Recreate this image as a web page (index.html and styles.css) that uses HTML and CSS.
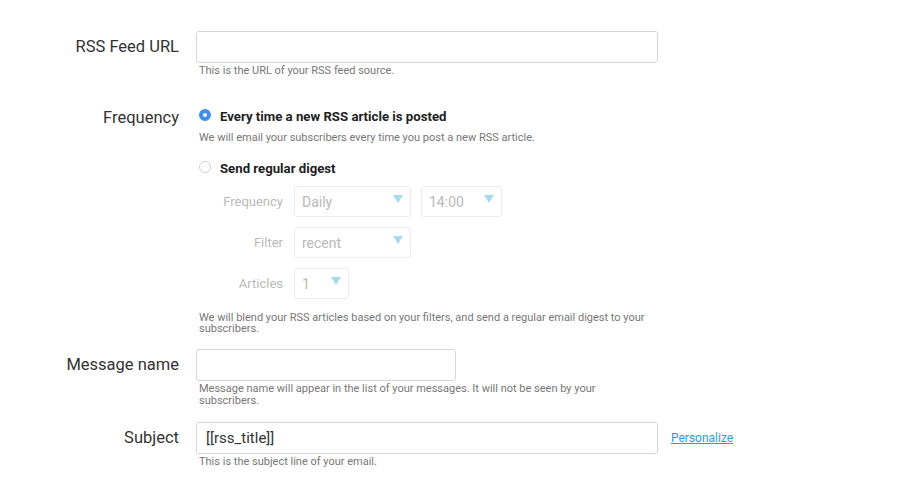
FILE: index.html
```html
<!DOCTYPE html>
<html lang="en">
<head>
<meta charset="utf-8">
<title>RSS campaign</title>
<link rel="stylesheet" href="styles.css">
</head>
<body>
<form class="form">
  <div class="row row-url">
    <label class="label">RSS Feed URL</label>
    <div class="field">
      <input class="input input-wide" type="text">
      <p class="help">This is the URL of your RSS feed source.</p>
    </div>
  </div>

  <div class="row row-freq">
    <div class="label label-small">Frequency</div>
    <div class="field">
      <div class="option">
        <span class="radio radio-on"></span>
        <span class="option-text">Every time a new RSS article is posted</span>
      </div>
      <p class="help help-option">We will email your subscribers every time you post a new RSS article.</p>
      <div class="option option-second">
        <span class="radio"></span>
        <span class="option-text">Send regular digest</span>
      </div>
      <div class="digest">
        <div class="sub-label">Frequency</div>
        <div class="sub-controls">
          <div class="select select-md"><span>Daily</span><i class="caret"></i></div>
          <div class="select select-time"><span>14:00</span><i class="caret"></i></div>
        </div>
        <div class="sub-label">Filter</div>
        <div class="sub-controls">
          <div class="select select-md"><span>recent</span><i class="caret"></i></div>
        </div>
        <div class="sub-label">Articles</div>
        <div class="sub-controls">
          <div class="select select-sm"><span>1</span><i class="caret"></i></div>
        </div>
      </div>
      <p class="help help-blend">We will blend your RSS articles based on your filters, and send a regular email digest to your subscribers.</p>
    </div>
  </div>

  <div class="row row-name">
    <label class="label">Message name</label>
    <div class="field">
      <input class="input input-mid" type="text">
      <p class="help help-multi">Message name will appear in the list of your messages. It will not be seen by your subscribers.</p>
    </div>
  </div>

  <div class="row row-subject">
    <label class="label">Subject</label>
    <div class="field">
      <div class="inline">
        <input class="input input-wide input-filled" type="text" value="[[rss_title]]">
        <a class="link" href="#">Personalize</a>
      </div>
      <p class="help">This is the subject line of your email.</p>
    </div>
  </div>
</form>
</body>
</html>
```

FILE: styles.css
```css
* { box-sizing: border-box; }

html, body {
  margin: 0;
  padding: 0;
  background: #ffffff;
  font-family: Roboto, "Liberation Sans", Arial, sans-serif;
  color: #333333;
}

.form {
  padding-top: 31px;
}

.row {
  display: grid;
  grid-template-columns: 179px 462px auto;
  column-gap: 17px;
  align-items: start;
}

.row-freq { margin-top: 28px; }
.row-name { margin-top: 15px; }
.row-subject { margin-top: 15px; }

.label {
  text-align: right;
  font-size: 16.5px;
  line-height: 32px;
  color: #333333;
}

.label-small {
  line-height: 22px;
  padding-top: 2px;
}

.field {
  display: flex;
  flex-direction: column;
  align-items: flex-start;
}

.input {
  height: 32px;
  border: 1px solid #d6d6d6;
  border-radius: 3px;
  padding: 0 9px;
  font-family: Roboto, "Liberation Sans", Arial, sans-serif;
  font-size: 15px;
  color: #333333;
  outline: none;
  background: #ffffff;
}

.input-wide { width: 462px; }
.input-mid { width: 260px; }

.help {
  margin: 2px 0 0 3px;
  font-size: 11px;
  line-height: 12px;
  color: #777777;
  max-width: 459px;
}

.help-option {
  margin-top: 4px;
  line-height: 13px;
}

.help-blend {
  margin-top: 13px;
  line-height: 11px;
}

.option {
  display: flex;
  align-items: center;
  gap: 9px;
  height: 22px;
  padding-left: 3px;
}

.option-second { margin-top: 13px; }

.option-text {
  font-size: 13.2px;
  font-weight: 700;
  color: #222222;
}

.radio {
  width: 12px;
  height: 12px;
  border-radius: 50%;
  border: 1px solid #cfcfcf;
  background: #ffffff;
  margin-top: -3px;
}

.radio-on {
  border: 4px solid #3d8ff0;
  background: #ffffff;
}

.digest {
  display: grid;
  grid-template-columns: 87px auto;
  column-gap: 11px;
  row-gap: 10px;
  margin-top: 7px;
  align-items: center;
}

.sub-label {
  text-align: right;
  font-size: 13px;
  color: #b9b9b9;
}

.sub-controls {
  display: flex;
  gap: 10px;
}

.select {
  height: 31px;
  border: 1px solid #ececec;
  border-radius: 3px;
  padding: 0 7px 0 7px;
  display: flex;
  align-items: center;
  justify-content: space-between;
  font-size: 14px;
  color: #b9b9b9;
}

.select-md { width: 117px; }
.select-time { width: 81px; }
.select-sm { width: 55px; }

.caret {
  width: 0;
  height: 0;
  border-left: 5px solid transparent;
  border-right: 5px solid transparent;
  border-top: 8px solid #a6daf2;
  margin-top: -5px;
}

.inline {
  display: flex;
  align-items: center;
  gap: 13px;
}

.link {
  font-size: 12px;
  color: #1c9fe0;
  text-decoration: underline;
  white-space: nowrap;
}
```
